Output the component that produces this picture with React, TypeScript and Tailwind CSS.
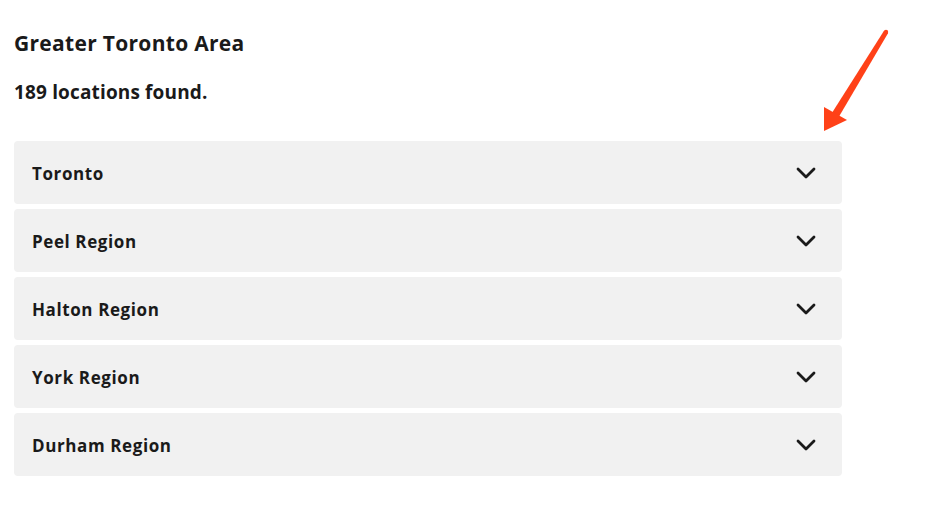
const regions = ['Toronto', 'Peel Region', 'Halton Region', 'York Region', 'Durham Region'];

function Chevron() {
  return (
    <svg width="20" height="12" viewBox="0 0 20 12" fill="none" className="shrink-0">
      <path d="M2 2l8 8 8-8" stroke="#1a1a1a" strokeWidth="2.8" strokeLinecap="round" strokeLinejoin="round" />
    </svg>
  );
}

export default function App() {
  return (
    <div className="relative w-[928px] h-[508px] bg-white text-[#1a1a1a]" style={{ fontFamily: '"Open Sans", Lato, sans-serif' }}>
      <div className="w-[828px] ml-[14px] pt-[29px]">
        <h1 className="text-[21px] font-bold leading-[28px] tracking-[0.3px]">Greater Toronto Area</h1>
        <p className="mt-[22px] text-[19px] font-bold leading-[26px] tracking-[0.15px]">189 locations found.</p>
        <div className="mt-[36px] flex flex-col gap-[5px]">
          {regions.map((r) => (
            <div key={r} className="h-[63px] bg-[#f1f1f1] rounded-[4px] flex items-center justify-between pl-[18px] pr-[26px]">
              <span className="text-[17px] font-bold tracking-[0.6px] mt-[2px]">{r}</span>
              <Chevron />
            </div>
          ))}
        </div>
      </div>
      {/* annotation arrow */}
      <svg className="absolute left-[818px] top-[24px]" width="80" height="112" viewBox="818 24 80 112">
        <circle cx="886" cy="32" r="2.2" fill="#ff4118" />
        <polygon points="888,33.2 884,30.8 830,116 837,120" fill="#ff4118" />
        <polygon points="824,131 824,107 847,120" fill="#ff4118" />
      </svg>
    </div>
  );
}
